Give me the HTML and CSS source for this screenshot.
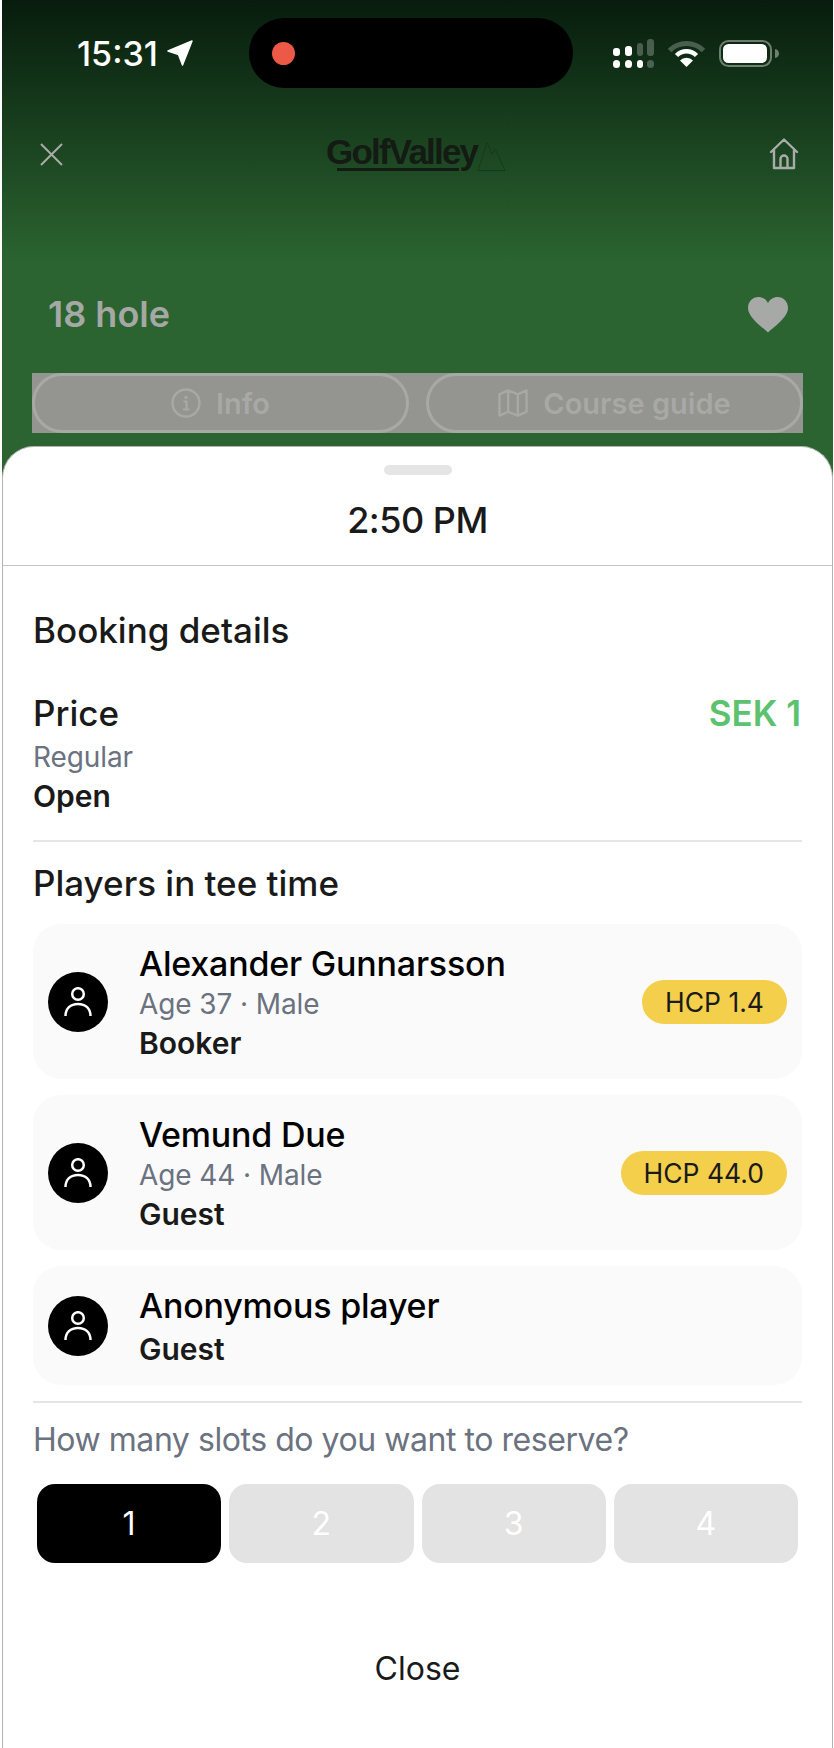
FILE: index.html
```html
<!DOCTYPE html>
<html lang="en">
<head>
  <meta charset="UTF-8">
  <meta name="viewport" content="width=device-width, initial-scale=1.0">
  <title>Booking details - GolfValley</title>
  <link rel="stylesheet" href="styles.css">
</head>
<body>
<div class="screen">
  <div class="status-bar">
    <div class="status-left">
      <span class="clock">15:31</span>
      <svg class="status-arrow" viewBox="0 0 26 26"><path d="M25 1 15.500 25 11.500 14.500 1 11Z" fill="#fff" stroke="#fff" stroke-width="1.500" stroke-linejoin="round"/></svg>
    </div>
    <div class="island"><span class="rec-dot"></span></div>
    <div class="status-right">
      <svg class="signal" viewBox="0 0 41 29">
        <rect x="0" y="9" width="7" height="8" rx="3" fill="#fff"/>
        <rect x="12" y="7" width="7" height="10" rx="3" fill="#fff"/>
        <rect x="24" y="4" width="6" height="13" rx="3" fill="#fff" opacity=".25"/>
        <rect x="34" y="0" width="7" height="17" rx="3" fill="#fff" opacity=".25"/>
        <rect x="0" y="21" width="7" height="8" rx="3.500" fill="#fff"/>
        <rect x="12" y="21" width="7" height="8" rx="3.500" fill="#fff"/>
        <rect x="24" y="21" width="6" height="8" rx="3" fill="#fff"/>
        <rect x="34" y="21" width="7" height="8" rx="3.500" fill="#fff" opacity=".25"/>
      </svg>
      <svg class="wifi" viewBox="0 0 37 27">
        <path d="M1.500 10.500a24 24 0 0 1 34 0" fill="none" stroke="#fff" stroke-width="5" opacity=".25"/>
        <path d="M8.500 15.500a14 14 0 0 1 20 0" fill="none" stroke="#fff" stroke-width="4.500"/>
        <path d="M18.500 27 12 20.500a9 9 0 0 1 13 0Z" fill="#fff"/>
      </svg>
      <svg class="battery" viewBox="0 0 60 27">
        <rect x="1" y="1" width="51" height="25" rx="8.500" fill="none" stroke="#fff" stroke-opacity=".4" stroke-width="2"/>
        <rect x="4" y="4" width="44" height="19" rx="5.500" fill="#fff"/>
        <path d="M56 9c2.500.5 4 2.200 4 4.500s-1.500 4-4 4.500Z" fill="#fff" opacity=".4"/>
      </svg>
    </div>
  </div>

  <div class="top-nav">
    <svg class="nav-close" viewBox="0 0 23 23"><path d="M1 1 22 22M22 1 1 22" fill="none" stroke="#a9aca9" stroke-width="2"/></svg>
    <div class="logo">
      <span class="logo-text">GolfValley</span>
      <svg class="logo-peak" viewBox="0 0 30 31"><path d="M1 30 10.500 1 15.500 13 19 8 29 30Z" fill="none" stroke="#143a1c" stroke-width="1"/></svg>
    </div>
    <svg class="nav-home" viewBox="0 0 30 32"><path d="M2 14 15 1.500 28 14M5 11V30H25V11M11.500 30V21a3.500 3.500 0 0 1 7 0V30" fill="none" stroke="#a9aca9" stroke-width="2.400" stroke-linejoin="round" stroke-linecap="round"/></svg>
  </div>

  <div class="course-row">
    <span class="course-name">18 hole</span>
    <svg class="heart" viewBox="0 0 42 36" preserveAspectRatio="none"><path d="M21 35.500C17 31.500 0 21 0 11 0 4.500 5 0 11 0c4.500 0 8 2.500 10 6 2-3.500 5.500-6 10-6 6 0 11 4.500 11 11 0 10-17 20.500-21 24.500Z" fill="#a7a9a7"/></svg>
  </div>

  <div class="course-actions">
    <div class="action-pill">
      <svg class="action-icon" viewBox="0 0 30 30"><circle cx="15" cy="15" r="13.500" fill="none" stroke="#a8a8a5" stroke-width="2.400"/><path d="M12.500 13.500H15.500V21M12 21.500H18.500" fill="none" stroke="#a8a8a5" stroke-width="2.200"/><circle cx="15" cy="9.500" r="1.800" fill="#a8a8a5"/></svg>
      <span>Info</span>
    </div>
    <div class="action-pill">
      <svg class="action-icon" viewBox="0 0 31 30"><path d="M1.500 6 10.500 2 20.500 6 29.500 2V24L20.500 28 10.500 24 1.500 28ZM10.500 2V24M20.500 6V28" fill="none" stroke="#a8a8a5" stroke-width="2.400" stroke-linejoin="round"/></svg>
      <span>Course guide</span>
    </div>
  </div>

  <div class="sheet">
    <div class="sheet-head">
      <div class="handle"></div>
      <h2 class="sheet-time">2:50 PM</h2>
    </div>

    <div class="sheet-body">
      <h3 class="section-title">Booking details</h3>
      <div class="price-row">
        <span class="section-title">Price</span>
        <span class="price">SEK 1</span>
      </div>
      <p class="muted price-type">Regular</p>
      <p class="strong">Open</p>
      <hr class="rule rule-price">

      <h3 class="section-title">Players in tee time</h3>
      <div class="players">
        <div class="player">
          <div class="avatar"><svg viewBox="0 0 28 30"><circle cx="14" cy="7" r="5.800" fill="none" stroke="#fff" stroke-width="2.500"/><path d="M1.500 29c0-7.500 5-12 12.500-12s12.500 4.500 12.500 12" fill="none" stroke="#fff" stroke-width="2.500"/></svg></div>
          <div class="player-info">
            <p class="player-name">Alexander Gunnarsson</p>
            <p class="muted">Age 37 · Male</p>
            <p class="strong">Booker</p>
          </div>
          <span class="hcp">HCP 1.4</span>
        </div>
        <div class="player">
          <div class="avatar"><svg viewBox="0 0 28 30"><circle cx="14" cy="7" r="5.800" fill="none" stroke="#fff" stroke-width="2.500"/><path d="M1.500 29c0-7.500 5-12 12.500-12s12.500 4.500 12.500 12" fill="none" stroke="#fff" stroke-width="2.500"/></svg></div>
          <div class="player-info">
            <p class="player-name">Vemund Due</p>
            <p class="muted">Age 44 · Male</p>
            <p class="strong">Guest</p>
          </div>
          <span class="hcp">HCP 44.0</span>
        </div>
        <div class="player player-anon">
          <div class="avatar"><svg viewBox="0 0 28 30"><circle cx="14" cy="7" r="5.800" fill="none" stroke="#fff" stroke-width="2.500"/><path d="M1.500 29c0-7.500 5-12 12.500-12s12.500 4.500 12.500 12" fill="none" stroke="#fff" stroke-width="2.500"/></svg></div>
          <div class="player-info">
            <p class="player-name">Anonymous player</p>
            <p class="strong">Guest</p>
          </div>
        </div>
      </div>
      <hr class="rule rule-players">

      <p class="muted slots-label">How many slots do you want to reserve?</p>
      <div class="slots">
        <button class="slot active">1</button>
        <button class="slot">2</button>
        <button class="slot">3</button>
        <button class="slot">4</button>
      </div>
      <button class="close-btn">Close</button>
    </div>
  </div>
</div>
</body>
</html>
```
FILE: styles.css
```css
* {
    margin: 0;
    padding: 0;
    box-sizing: border-box;
    font-family: 'Inter', sans-serif;
}

body {
    background-color: #fff;
    color: #1a1a1a;
}

.screen {
    height: 1748px;
    margin: 0 1px 0 2px;
    overflow: hidden;
    display: flex;
    flex-direction: column;
    background: linear-gradient(180deg, #071c0d 0, #2b6430 262px);
}

/* status bar */
.status-bar {
    display: flex;
    align-items: center;
    height: 70px;
    margin-top: 18px;
    padding-left: 75px;
}

.status-left {
    display: flex;
    align-items: center;
    gap: 9px;
    width: 117px;
    margin-right: 55px;
}

.clock {
    color: #fff;
    font-size: 34px;
    font-weight: 500;
}

.status-arrow {
    width: 26px;
    height: 26px;
    flex: none;
}

.island {
    width: 324px;
    height: 70px;
    border-radius: 35px;
    background-color: #000;
    display: flex;
    align-items: center;
    padding-left: 23px;
    margin-right: 40px;
}

.rec-dot {
    width: 23px;
    height: 23px;
    border-radius: 50%;
    background-color: #ec5a47;
}

.status-right {
    display: flex;
    align-items: center;
}

.signal {
    width: 41px;
    height: 29px;
    margin-right: 14px;
}

.wifi {
    width: 37px;
    height: 27px;
    margin-right: 14px;
}

.battery {
    width: 60px;
    height: 27px;
}

/* top nav */
.top-nav {
    display: flex;
    justify-content: space-between;
    align-items: center;
    height: 34px;
    margin-top: 49px;
    padding: 0 34px 0 38px;
}

.nav-close {
    width: 23px;
    height: 23px;
}

.nav-home {
    width: 30px;
    height: 32px;
}

.logo {
    display: flex;
    align-items: flex-end;
    width: 180px;
}

.logo-text {
    position: relative;
    width: 151px;
    margin-bottom: 4px;
    color: #141a14;
    font-family: 'Liberation Sans', sans-serif;
    font-size: 35px;
    line-height: 32px;
    font-weight: 700;
    letter-spacing: -1.8px;
    white-space: nowrap;
}

.logo-text::after {
    content: '';
    position: absolute;
    left: 11px;
    bottom: -3px;
    width: 122px;
    height: 3px;
    background-color: #141a14;
}

.logo-peak {
    width: 30px;
    height: 31px;
}

/* course header */
.course-row {
    display: flex;
    justify-content: space-between;
    align-items: center;
    height: 36px;
    margin-top: 125px;
    padding: 0 45px 0 46px;
}

.course-name {
    color: #a5a8a5;
    font-size: 36px;
    font-weight: 600;
}

.heart {
    width: 40px;
    height: 36px;
    margin-top: 2px;
}

.course-actions {
    display: flex;
    justify-content: space-between;
    height: 60px;
    margin: 41px 30px 13px 30px;
    background-color: #949490;
}

.action-pill {
    display: flex;
    justify-content: center;
    align-items: center;
    gap: 15px;
    width: 377px;
    border: 3px solid #a8a8a5;
    border-radius: 30px;
    color: #a8a8a5;
    font-size: 29px;
    font-weight: 600;
}

.action-icon {
    width: 30px;
    height: 30px;
}

/* bottom sheet */
.sheet {
    flex: 1;
    background-color: #fff;
    border: 1px solid #b4b4b4;
    border-bottom: none;
    border-radius: 32px 32px 0 0;
}

.sheet-head {
    height: 119px;
    border-bottom: 1px solid #c6c6c6;
    text-align: center;
    padding-top: 18px;
}

.handle {
    width: 68px;
    height: 10px;
    margin: 0 auto;
    border-radius: 5px;
    background-color: #e5e5e5;
}

.sheet-time {
    margin-top: 23px;
    font-size: 36px;
    line-height: 44px;
    font-weight: 500;
    letter-spacing: -0.5px;
}

.sheet-body {
    padding: 44px 30px 0;
}

.section-title {
    font-size: 35px;
    line-height: 40px;
    font-weight: 500;
}

.price-row {
    display: flex;
    justify-content: space-between;
    margin-top: 43px;
}

.price {
    padding-right: 1px;
    color: #5cc26f;
    font-size: 35px;
    line-height: 40px;
    font-weight: 600;
}

.muted {
    color: #6b7280;
    font-size: 28px;
    line-height: 39px;
    letter-spacing: -0.1px;
}

.strong {
    font-size: 30px;
    line-height: 39px;
    font-weight: 600;
}

.price-type {
    margin-top: 5px;
}

.rule {
    border: none;
    height: 2px;
    background-color: #e5e5e5;
}

.rule-price {
    margin: 24px 0 21px;
}

/* players */
.players {
    display: flex;
    flex-direction: column;
    gap: 16px;
    margin-top: 21px;
}

.player {
    display: flex;
    align-items: center;
    padding: 17px 15px 16px;
    border-radius: 28px;
    background-color: #fafafa;
}

.avatar {
    width: 60px;
    height: 60px;
    flex: none;
    display: flex;
    justify-content: center;
    align-items: center;
    border-radius: 50%;
    background-color: #000;
}

.avatar svg {
    width: 28px;
    height: 30px;
}

.player-info {
    flex: 1;
    padding: 3px 0 0 31px;
}

.player-name {
    margin-bottom: 2px;
    color: #000;
    font-size: 34px;
    line-height: 39px;
    font-weight: 500;
    letter-spacing: -0.2px;
}

.hcp {
    height: 44px;
    padding: 0 23px;
    border-radius: 22px;
    background-color: #f4cf4b;
    font-size: 26.500px;
    line-height: 44px;
}

.player-anon .strong {
    margin-top: 5px;
}

.rule-players {
    margin: 16px 0 17px;
}

/* slots */
.slots-label {
    font-size: 32px;
    letter-spacing: -0.45px;
}

.slots {
    display: flex;
    gap: 8px;
    margin: 25px 4px 0;
}

.slot {
    flex: 1;
    height: 79px;
    border: none;
    border-radius: 18px;
    background-color: #e3e3e3;
    color: #fff;
    font-size: 32px;
}

.slot.active {
    background-color: #000;
}

.close-btn {
    display: block;
    width: 100%;
    margin-top: 86px;
    border: none;
    background: none;
    color: #1a1a1a;
    font-size: 32px;
    line-height: 40px;
}
```
